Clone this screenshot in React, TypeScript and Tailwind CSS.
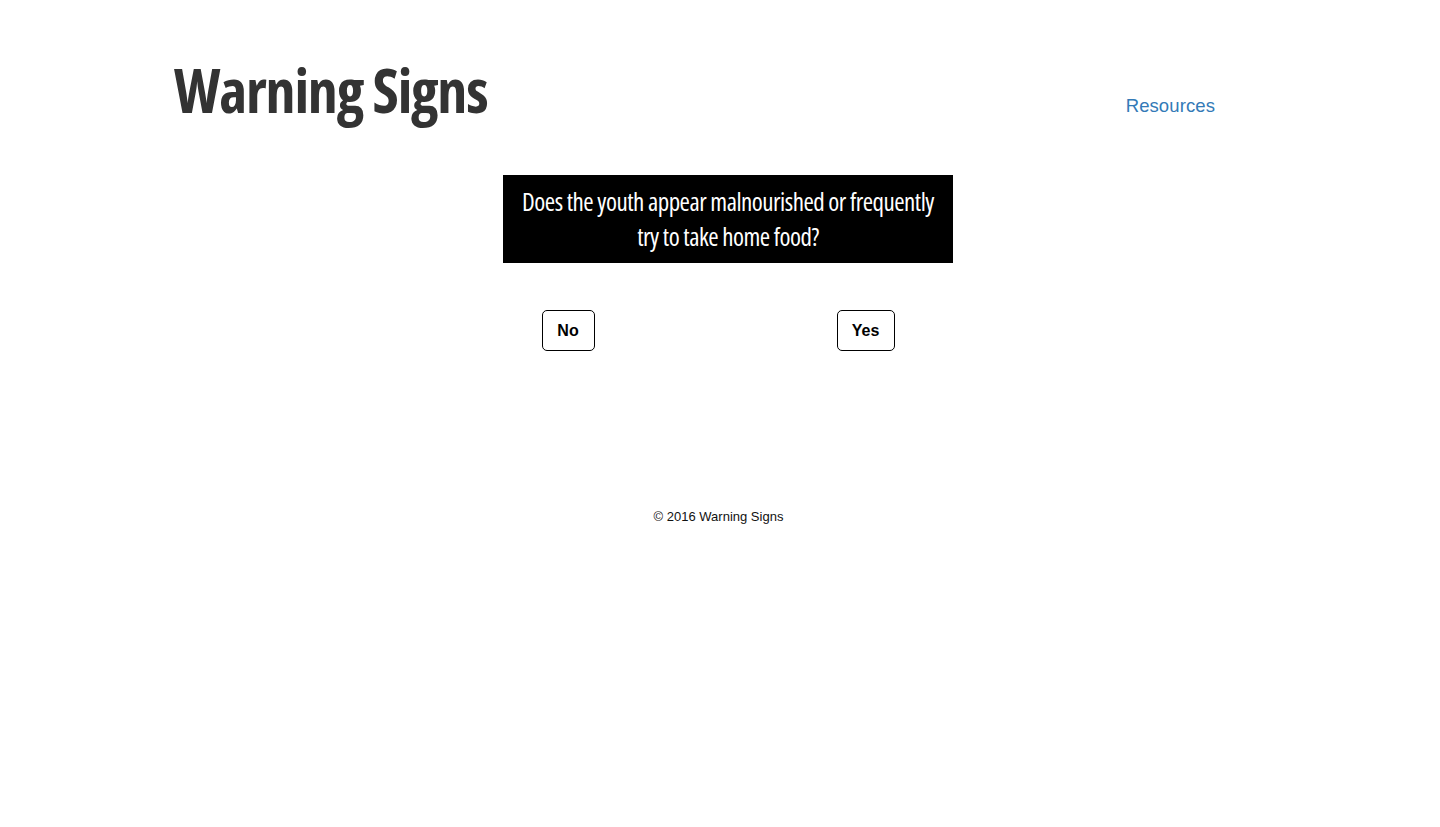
export default function App() {
  return (
    <div className="min-h-[827px] bg-white font-['Liberation_Sans',Arial,sans-serif]">
      <header className="flex items-baseline justify-between pl-[174px] pr-[225px] pt-[57px]">
        <h1 className="font-['Open_Sans',sans-serif] font-stretch-condensed text-[60px] leading-[66px] font-bold tracking-[-1.2px] text-[#333333]">
          Warning Signs
        </h1>
        <a href="#" className="relative top-[-1px] text-[18.5px] tracking-[0.1px] text-[#337ab7]">
          Resources
        </a>
      </header>

      <main className="flex flex-col items-center pt-[52px]">
        <div className="ml-[16px] w-[450px] bg-black px-[10px] py-[9px] text-center font-['Open_Sans',sans-serif] font-stretch-condensed text-[25px] leading-[35px] tracking-[-0.5px] text-white">
          Does the youth appear malnourished or frequently try to take home food?
        </div>

        <div className="ml-[-4px] mt-[47px] flex w-[353px] justify-between">
          <button className="h-[41px] w-[53px] rounded-[5px] border border-black bg-white text-[16px] font-bold text-black">
            No
          </button>
          <button className="h-[41px] w-[58px] rounded-[5px] border border-black bg-white text-[16px] font-bold text-black">
            Yes
          </button>
        </div>
      </main>

      <footer className="mt-[156px] text-center text-[13px] text-[#111]">
        <span className="ml-[-3px]">© 2016 Warning Signs</span>
      </footer>
    </div>
  );
}
